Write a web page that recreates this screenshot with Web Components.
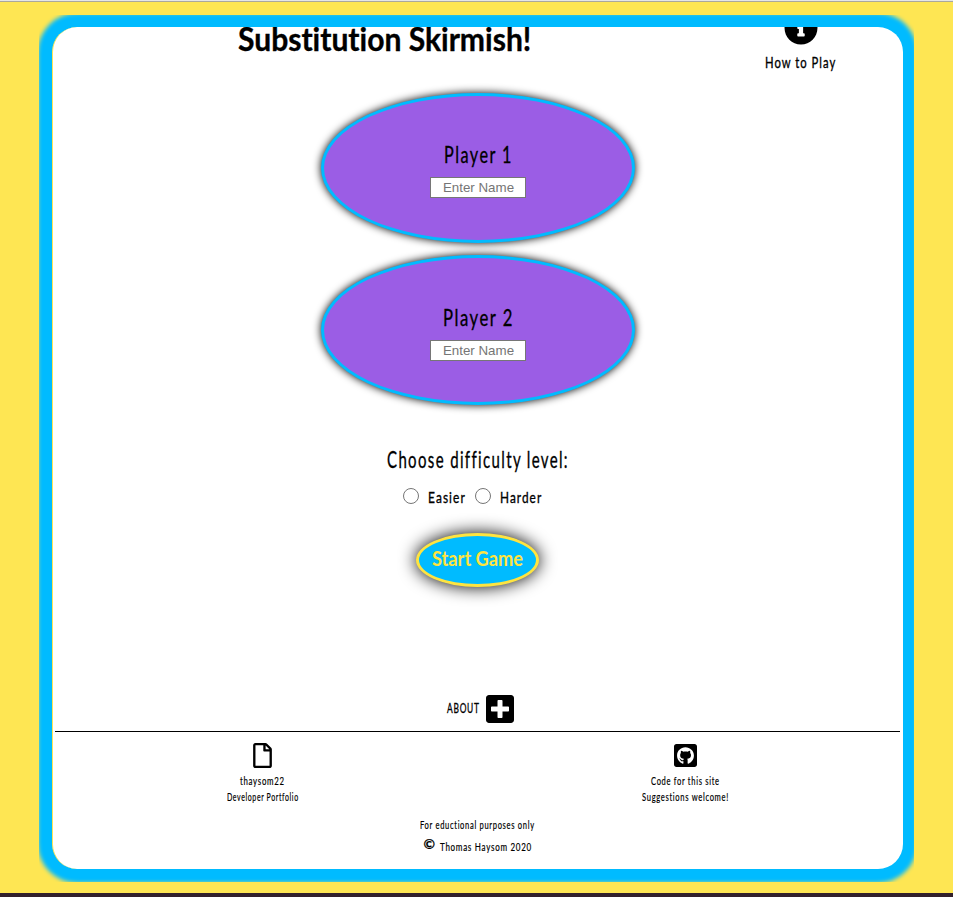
<!DOCTYPE html>
<html lang="en">
<head>
<meta charset="utf-8">
<title>Substitution Skirmish!</title>
<style>
html, body { margin: 0; height: 100%; overflow: hidden; }
body { font-family: Lato, "Open Sans", sans-serif; color: #000; font-variant-ligatures: none; }
</style>
</head>
<body>
<game-app></game-app>
<script>
function define(name, html, init) {
  const template = document.createElement('template');
  template.innerHTML = html;
  customElements.define(name, class extends HTMLElement {
    connectedCallback() {
      if (this.shadowRoot) return;
      this.attachShadow({ mode: 'open' }).append(template.content.cloneNode(true));
      if (init) init(this, this.shadowRoot);
    }
  });
}

// Text condensed horizontally to a given width, like a narrow handwritten face.
define('fit-text', `<style>
  :host { display: block; white-space: nowrap; flex: none; line-height: 1.2; -webkit-text-stroke: .35px currentColor; }
  span { display: inline-block; transform-origin: 0 50%; vertical-align: top; }
</style><span><slot></slot></span>`, (host, root) => {
  const span = root.querySelector('span');
  const width = +host.getAttribute('width');
  host.style.fontSize = host.getAttribute('size') + 'px';
  host.style.width = width + 'px';
  span.style.letterSpacing = host.getAttribute('spacing') || '.09em';
  span.style.transform = 'scaleX(' + width / span.offsetWidth + ')';
});

const icons = {
  info: ['0 0 512 512', 'M256 8C119.043 8 8 119.083 8 256c0 136.997 111.043 248 248 248s248-111.003 248-248C504 119.083 392.957 8 256 8zm0 110c23.196 0 42 18.804 42 42s-18.804 42-42 42-42-18.804-42-42 18.804-42 42-42zm56 254c0 6.627-5.373 12-12 12h-88c-6.627 0-12-5.373-12-12v-24c0-6.627 5.373-12 12-12h12v-64h-12c-6.627 0-12-5.373-12-12v-24c0-6.627 5.373-12 12-12h64c6.627 0 12 5.373 12 12v100h12c6.627 0 12 5.373 12 12v24z'],
  plus: ['0 32 448 448', 'M400 32H48C21.5 32 0 53.5 0 80v352c0 26.5 21.5 48 48 48h352c26.5 0 48-21.5 48-48V80c0-26.5-21.5-48-48-48zm-32 252c0 6.6-5.4 12-12 12h-92v92c0 6.6-5.4 12-12 12h-56c-6.6 0-12-5.4-12-12v-92H92c-6.6 0-12-5.4-12-12v-56c0-6.6 5.4-12 12-12h92v-92c0-6.6 5.4-12 12-12h56c6.6 0 12 5.4 12 12v92h92c6.6 0 12 5.4 12 12v56z'],
  file: ['0 0 384 512', 'M369.9 97.9L286 14C277 5 264.8-.1 252.1-.1H48C21.5 0 0 21.5 0 48v416c0 26.5 21.5 48 48 48h288c26.5 0 48-21.5 48-48V131.9c0-12.7-5.1-25-14.1-34zM332.1 128H256V51.9l76.1 76.1zM48 464V48h160v104c0 13.3 10.7 24 24 24h104v288H48z'],
  github: ['0 32 448 448', 'M400 32H48C21.5 32 0 53.5 0 80v352c0 26.5 21.5 48 48 48h352c26.5 0 48-21.5 48-48V80c0-26.5-21.5-48-48-48zM277.3 415.7c-8.4 1.5-11.5-3.7-11.5-8 0-5.4.2-33 .2-55.3 0-15.6-5.2-25.5-11.3-30.7 37-4.1 76-9.2 76-73.1 0-18.2-6.5-27.3-17.1-39 1.7-4.3 7.4-22-1.7-45-13.9-4.3-45.7 17.9-45.7 17.9-13.2-3.7-27.5-5.6-41.6-5.6-14.1 0-28.4 1.9-41.6 5.6 0 0-31.8-22.2-45.7-17.9-9.1 22.9-3.5 40.6-1.7 45-10.6 11.7-15.6 20.8-15.6 39 0 63.6 37.3 69 74.3 73.1-4.8 4.3-9.1 11.7-10.6 22.3-9.5 4.3-33.8 11.7-48.3-13.9-9.1-15.8-25.5-17.1-25.5-17.1-16.2-.2-1.1 10.2-1.1 10.2 10.8 5 18.4 24.2 18.4 24.2 9.7 29.7 56.1 19.7 56.1 19.7 0 13.9.2 36.5.2 40.6 0 4.3-3 9.5-11.5 8-66-22.1-112.2-84.9-112.2-158.3 0-91.8 70.2-161.5 162-161.5S388 165.6 388 257.4c.1 73.4-44.7 136.3-110.7 158.3z']
};
define('game-icon', `<style>
  :host { display: block; flex: none; } svg { display: block; width: 100%; height: 100%; }
</style><svg><path/></svg>`, (host, root) => {
  const [box, path] = icons[host.getAttribute('name')];
  root.querySelector('svg').setAttribute('viewBox', box);
  root.querySelector('path').setAttribute('d', path);
});

define('game-header', `<style>
  :host { display: grid; grid-template-columns: 664px 168px; height: 66px; justify-items: center; align-items: start; }
  h1 { margin: -7.4px 0 0; font-weight: 700; }
  .help { display: flex; flex-direction: column; align-items: center; gap: 8px; margin: -16px 0 0 1px; }
  game-icon { width: 34px; height: 34px; }
  .help fit-text { margin-top: -1px; }
</style><h1><fit-text size="32" width="293" spacing="0"><slot></slot></fit-text></h1>
<div class="help"><game-icon name="info"></game-icon><fit-text size="16" width="71">How to Play</fit-text></div>`);

define('player-card', `<style>
  :host { box-sizing: border-box; display: flex; flex-direction: column; align-items: center; width: 314px; height: 150px;
    margin-bottom: 12px; padding-top: 44px; border: 3px solid #00bbff; border-radius: 50%; background: #9b5de5; box-shadow: 0 0 9px #000; }
  :host([lower]) { padding-top: 45px; margin-bottom: 0; }
  .label { height: 37px; padding-left: 1px; }
  input { box-sizing: border-box; width: 96px; height: 21px; margin: 0; padding: 1px 1px 1px 3px; border: 1px solid #767676;
    background: #fff; text-align: center; font: 13.333px "Liberation Sans", sans-serif; }
  input::placeholder { color: #757575; }
</style><div class="label"></div><input placeholder="Enter Name">`, (host, root) => {
  const label = document.createElement('fit-text');
  label.setAttribute('size', '24');
  label.setAttribute('width', host.getAttribute('label-width'));
  label.append(document.createElement('slot'));
  root.querySelector('.label').append(label);
});

define('difficulty-picker', `<style>
  :host { display: flex; flex-direction: column; align-items: center; margin-top: 40.3px; }
  div { display: flex; align-items: center; height: 16px; margin: 14px 0 0 -10px; }
  input { width: 16px; height: 16px; margin: 0 9px 0 0; }
  fit-text + input { margin-left: 9px; }
</style><fit-text size="24" width="182">Choose difficulty level:</fit-text>
<div><input type="radio" name="level"><fit-text size="16" width="38">Easier</fit-text><input type="radio" name="level"><fit-text size="16" width="42">Harder</fit-text></div>`);

define('start-button', `<style>
  :host { display: block; margin-top: 29px; }
  button { box-sizing: border-box; display: flex; justify-content: center; width: 123px; height: 54px; padding: 10px 0 0; align-items: flex-start;
    border: 3px solid #fee440; border-radius: 50%; background: #00bbff; color: #fee440; box-shadow: 0 0 17px #000; font-family: inherit; font-weight: 700; }
  fit-text { -webkit-text-stroke: 0; }
</style><button><fit-text size="20" width="91" spacing="0"><slot></slot></fit-text></button>`);

define('about-toggle', `<style>
  :host { display: flex; align-items: center; gap: 6px; margin: 108px 0 0 6px; }
  game-icon { width: 28px; height: 28px; margin-bottom: -1px; }
</style><fit-text size="14" width="33"><slot></slot></fit-text><game-icon name="plus"></game-icon>`);

define('game-footer', `<style>
  :host { display: flex; flex-direction: column; align-items: center; width: 845px; margin-top: 9px; border-top: 1px solid #000; line-height: 16px; }
  .links { display: grid; grid-template-columns: 423px 423px; padding-top: 11px; margin-left: -7px; }
  .link { display: flex; flex-direction: column; align-items: center; }
  fit-text { line-height: 16px; -webkit-text-stroke: .2px currentColor; }
  .icon { display: grid; place-items: center; height: 25px; margin-bottom: 5.4px; }
  .file { width: 19px; height: 25px; } .hub { width: 23px; height: 23px; }
  .note { margin-top: 12px; }
  .copy { display: flex; align-items: center; gap: 4px; margin-top: 6px; }
  .mark { margin-top: -6px; font-weight: 700; }
</style>
<div class="links">
  <div class="link"><div class="icon"><game-icon class="file" name="file"></game-icon></div><fit-text size="11.5" width="45">thaysom22</fit-text><fit-text size="11.5" width="72">Developer Portfolio</fit-text></div>
  <div class="link"><div class="icon"><game-icon class="hub" name="github"></game-icon></div><fit-text size="11.5" width="69">Code for this site</fit-text><fit-text size="11.5" width="87">Suggestions welcome!</fit-text></div>
</div>
<fit-text class="note" size="11.5" width="115">For eductional purposes only</fit-text>
<div class="copy"><fit-text class="mark" size="14" width="12" spacing="0">©</fit-text><fit-text size="11.5" width="92">Thomas Haysom 2020</fit-text></div>`);

define('game-frame', `<style>
  :host { box-sizing: border-box; display: block; width: 875px; height: 867px; margin: 13px 0 0 39px; padding: 12px 11px 13px 13px; overflow: hidden; }
  main { box-sizing: border-box; display: flex; flex-direction: column; align-items: center; width: 851px; height: 842px; border-left: 1px solid #fee653;
    border-radius: 25px; background: #fff; box-shadow: 0 0 4px 14px #00bbff; }
  .clip { display: flex; flex-direction: column; align-items: center; width: 851px; height: 842px; margin-left: -1px; overflow: hidden; flex: none; }
  ::slotted(game-header) { width: 851px; }
</style><main><div class="clip"><slot></slot></div></main>`);

define('game-app', `<style>
  :host { box-sizing: border-box; display: block; width: 953px; height: 897px; overflow: hidden; background: #fee653;
    border-top: 1px solid #e6e6e6; border-bottom: 4px solid #32202c; }
  .edge { height: 1px; background: #aaa89c; }
</style><div class="edge"></div>
<game-frame>
  <game-header>Substitution Skirmish!</game-header>
  <player-card label-width="69">Player 1</player-card>
  <player-card label-width="71" lower>Player 2</player-card>
  <difficulty-picker></difficulty-picker>
  <start-button>Start Game</start-button>
  <about-toggle>ABOUT</about-toggle>
  <game-footer></game-footer>
</game-frame>`);
</script>
</body>
</html>
